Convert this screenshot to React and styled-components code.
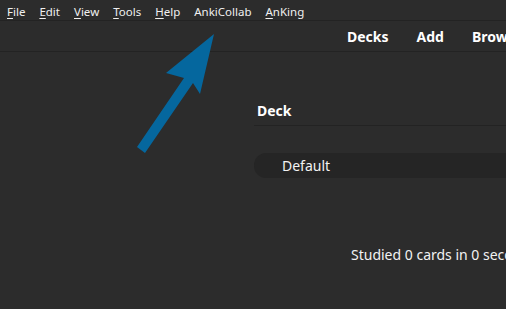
import React from "react";
import styled, { createGlobalStyle } from "styled-components";

const Global = createGlobalStyle`
  html, body { margin: 0; padding: 0; background: #2c2c2c; overflow: hidden; }
  body { font-family: "Noto Sans", "Open Sans", sans-serif; color: #fff; }
`;

const Page = styled.div`
  position: relative;
  width: 506px;
  height: 309px;
  overflow: hidden;
  background: #2c2c2c;
  display: flex;
  flex-direction: column;
`;

const MenuBar = styled.div`
  height: 21px;
  box-sizing: border-box;
  padding-top: 4px;
  display: flex;
  align-items: center;
  border-bottom: 1px solid #232323;
  background: #2c2c2c;
`;

const MenuItem = styled.span`
  font-size: 11.5px;
  color: #f0f0f0;
  padding: 0 7px;
  line-height: 16px;
  white-space: nowrap;
`;

const Mn = styled.span`
  text-decoration: underline;
  text-underline-offset: 2px;
`;

const Toolbar = styled.div`
  height: 30px;
  display: flex;
  align-items: center;
  gap: 28px;
  padding-left: 347px;
  border-bottom: 1px solid #232323;
  white-space: nowrap;
`;

const ToolLink = styled.span`
  font-size: 14px;
  font-weight: 700;
  color: #fff;
`;

const Main = styled.div`
  flex: 1;
  display: flex;
  flex-direction: column;
  padding-left: 254px;
  padding-top: 49px;
`;

const TableHead = styled.div`
  height: 25px;
  box-sizing: border-box;
  padding: 0 0 5px 3px;
  display: flex;
  align-items: center;
  font-size: 14px;
  font-weight: 700;
  border-bottom: 1px solid #232323;
  margin-bottom: 27px;
`;

const DeckRow = styled.div`
  height: 25px;
  display: flex;
  align-items: center;
  padding-left: 28px;
  background: #252525;
  border-radius: 12px 0 0 12px;
  font-size: 14px;
  color: #f2f2f2;
`;

const Studied = styled.div`
  margin-top: 67px;
  margin-left: 97px;
  font-size: 14px;
  color: #f2f2f2;
  white-space: nowrap;
`;

const ArrowSvg = styled.svg`
  position: absolute;
  left: 0;
  top: 0;
  pointer-events: none;
`;

export default function App() {
  const menus = [
    ["F", "ile"],
    ["E", "dit"],
    ["V", "iew"],
    ["T", "ools"],
    ["H", "elp"],
    ["", "AnkiCollab"],
    ["A", "nKing"],
  ];
  return (
    <Page>
      <Global />
      <MenuBar>
        {menus.map(([m, rest]) => (
          <MenuItem key={m + rest}>
            {m && <Mn>{m}</Mn>}
            {rest}
          </MenuItem>
        ))}
      </MenuBar>
      <Toolbar>
        <ToolLink>Decks</ToolLink>
        <ToolLink>Add</ToolLink>
        <ToolLink>Browse</ToolLink>
      </Toolbar>
      <Main>
        <TableHead>Deck</TableHead>
        <DeckRow>Default</DeckRow>
        <Studied>Studied 0 cards in 0 seconds today.</Studied>
      </Main>
      <ArrowSvg width="506" height="309" viewBox="0 0 506 309">
        <polygon
          points="137,147 184,78 166,73 214,34 200,94 193,83 145,153"
          fill="#05679e"
        />
      </ArrowSvg>
    </Page>
  );
}
